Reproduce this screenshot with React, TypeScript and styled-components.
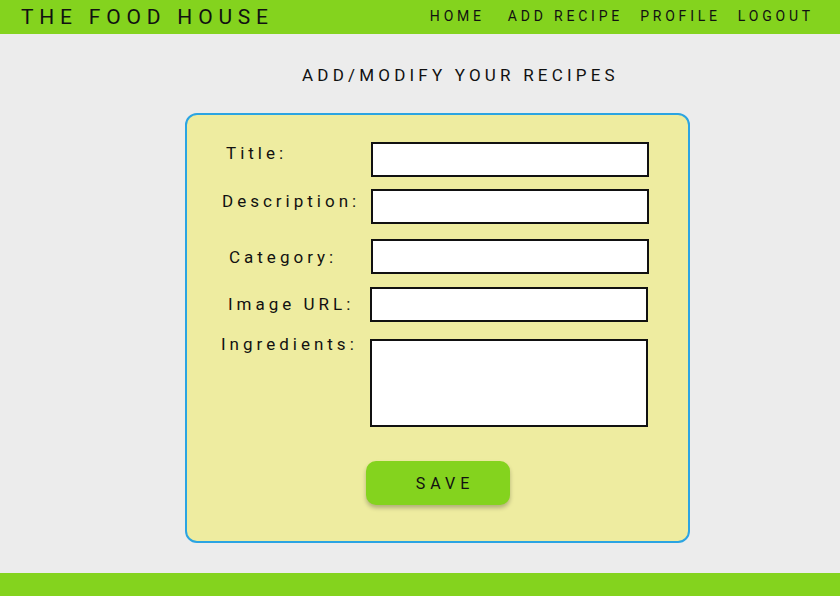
import React, { FC } from 'react';
import styled, { createGlobalStyle } from 'styled-components';

const GlobalStyle = createGlobalStyle`
  html, body {
    margin: 0;
    padding: 0;
    background: #ececec;
    font-family: 'Roboto', 'Liberation Sans', sans-serif;
    color: #111;
  }
`;

interface Field {
  label: string;
  labelX: number;
  labelY: number;
  gap: number;
  shift?: number;
  multiline?: boolean;
}

const fields: Field[] = [
  { label: 'Title:', labelX: 5, labelY: 1, gap: 0 },
  { label: 'Description:', labelX: 1, labelY: 2, gap: 12 },
  { label: 'Category:', labelX: 8, labelY: 8, gap: 15 },
  { label: 'Image URL:', labelX: 7, labelY: 7, gap: 13, shift: -1 },
  { label: 'Ingredients:', labelX: 0, labelY: -5, gap: 17, shift: -1, multiline: true },
];

// @ Recipe page
const App: FC = () => {
  return (
    <>
      <GlobalStyle />
      <Page>
        <Header>
          <Brand>THE FOOD HOUSE</Brand>
          <Nav>
            <NavLink first>HOME</NavLink>
            <NavLink>ADD RECIPE</NavLink>
            <NavLink>PROFILE</NavLink>
            <NavLink>LOGOUT</NavLink>
          </Nav>
        </Header>
        <Main>
          <Heading>ADD/MODIFY YOUR RECIPES</Heading>
          <Card>
            {fields.map((f) => (
              <Row key={f.label} gap={f.gap}>
                <Label dx={f.labelX} dy={f.labelY}>{f.label}</Label>
                {f.multiline ? <TextArea shift={f.shift ?? 0} /> : <Input shift={f.shift ?? 0} />}
              </Row>
            ))}
            <SaveRow>
              <SaveButton>SAVE</SaveButton>
            </SaveRow>
          </Card>
        </Main>
        <Footer />
      </Page>
    </>
  );
};

// @ styles

const Page = styled.div`
  width: 840px;
  height: 596px;
  display: flex;
  flex-direction: column;
  overflow: hidden;
`;

const Header = styled.header`
  height: 34px;
  background: #84d31e;
  display: flex;
  align-items: center;
  justify-content: space-between;
  padding: 0 26px 0 21px;
  box-sizing: border-box;
`;

const Brand = styled.div`
  font-size: 21px;
  letter-spacing: 5.8px;
  color: #111;
  margin-top: -1px;
`;

const Nav = styled.nav`
  display: flex;
  gap: 17px;
  margin-top: -3px;
`;

const NavLink = styled.span<{ first?: boolean }>`
  font-size: 14px;
  letter-spacing: 3.8px;
  color: #111;
  cursor: pointer;
  margin-right: ${(p) => (p.first ? 6 : 0)}px;
`;

const Main = styled.main`
  flex: 1;
  display: flex;
  flex-direction: column;
  align-items: flex-start;
`;

const Heading = styled.h1`
  margin: 31px 0 0 302px;
  font-size: 17px;
  font-weight: 400;
  letter-spacing: 4.2px;
  line-height: 20px;
`;

const Card = styled.div`
  margin: 28px 0 0 185px;
  width: 505px;
  height: 430px;
  box-sizing: border-box;
  background: #eeeca0;
  border: 2px solid #2ba4e2;
  border-radius: 12px;
  padding: 27px 0 0 34px;
`;

const Row = styled.div<{ gap: number }>`
  display: flex;
  align-items: flex-start;
  margin-top: ${(p) => p.gap}px;
`;

const Label = styled.label<{ dx: number; dy: number }>`
  width: 150px;
  box-sizing: border-box;
  padding-left: ${(p) => p.dx}px;
  margin-top: ${(p) => p.dy}px;
  font-size: 17px;
  letter-spacing: 4px;
  line-height: 20px;
  color: #111;
  white-space: nowrap;
`;

const Input = styled.input<{ shift: number }>`
  width: 278px;
  height: 35px;
  box-sizing: border-box;
  margin: 0 0 0 ${(p) => p.shift}px;
  border: 2px solid #111;
  background: #fff;
  outline: none;
`;

const TextArea = styled.textarea<{ shift: number }>`
  width: 278px;
  height: 88px;
  box-sizing: border-box;
  margin: 0 0 0 ${(p) => p.shift}px;
  border: 2px solid #111;
  background: #fff;
  resize: none;
  outline: none;
`;

const SaveRow = styled.div`
  margin-top: 34px;
  padding-left: 145px;
`;

const SaveButton = styled.button`
  width: 144px;
  height: 44px;
  border: none;
  border-radius: 10px;
  background: #84d31e;
  box-shadow: 0 3px 4px rgba(0, 0, 0, 0.25);
  font-family: 'Roboto', 'Liberation Sans', sans-serif;
  font-size: 16px;
  letter-spacing: 5px;
  color: #111;
  padding: 0 0 0 14px;
  cursor: pointer;
`;

const Footer = styled.footer`
  height: 23px;
  background: #84d31e;
`;

export default App;
